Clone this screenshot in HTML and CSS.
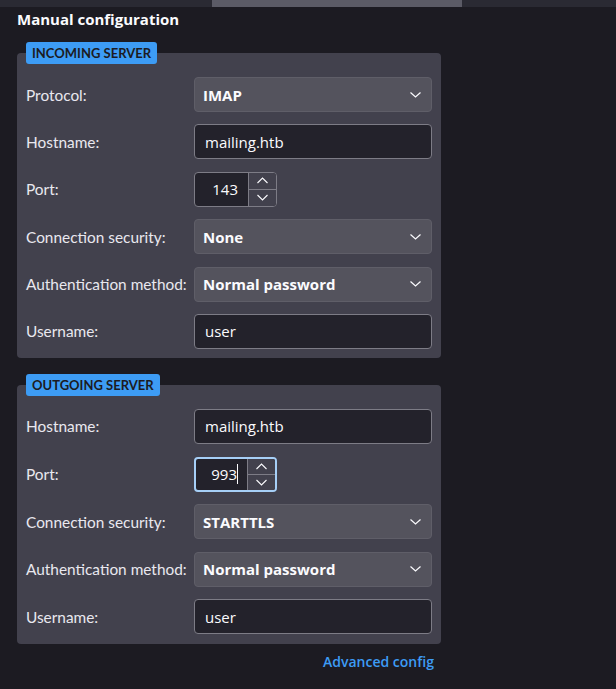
FILE: index.html
```html
<!DOCTYPE html>
<html lang="en">
<head>
<meta charset="utf-8">
<title>Manual configuration</title>
<link rel="stylesheet" href="styles.css">
</head>
<body>
<div class="topbar"><div class="thumb"></div></div>
<main class="content">
  <h1 class="title">Manual configuration</h1>

  <section class="group incoming">
    <div class="badge">INCOMING SERVER</div>
    <div class="rows">
      <div class="row">
        <span class="label">Protocol:</span>
        <div class="select"><span>IMAP</span><svg class="chev" width="11" height="6" viewBox="0 0 11 6"><path d="M0.5 0.5 L5.5 5 L10.5 0.5" fill="none" stroke="#fbfbfe" stroke-width="1.2"/></svg></div>
      </div>
      <div class="row">
        <span class="label">Hostname:</span>
        <div class="input">mailing.htb</div>
      </div>
      <div class="row">
        <span class="label">Port:</span>
        <div class="spin">
          <div class="num">143</div>
          <div class="btns">
            <div class="btn"><svg width="11" height="7" viewBox="0 0 11 7"><path d="M0.5 6 L5.5 1 L10.5 6" fill="none" stroke="#fbfbfe" stroke-width="1.1"/></svg></div>
            <div class="btn"><svg width="11" height="7" viewBox="0 0 11 7"><path d="M0.5 1 L5.5 6 L10.5 1" fill="none" stroke="#fbfbfe" stroke-width="1.1"/></svg></div>
          </div>
        </div>
      </div>
      <div class="row">
        <span class="label">Connection security:</span>
        <div class="select"><span>None</span><svg class="chev" width="11" height="6" viewBox="0 0 11 6"><path d="M0.5 0.5 L5.5 5 L10.5 0.5" fill="none" stroke="#fbfbfe" stroke-width="1.2"/></svg></div>
      </div>
      <div class="row">
        <span class="label">Authentication method:</span>
        <div class="select"><span>Normal password</span><svg class="chev" width="11" height="6" viewBox="0 0 11 6"><path d="M0.5 0.5 L5.5 5 L10.5 0.5" fill="none" stroke="#fbfbfe" stroke-width="1.2"/></svg></div>
      </div>
      <div class="row">
        <span class="label">Username:</span>
        <div class="input">user</div>
      </div>
    </div>
  </section>

  <section class="group outgoing">
    <div class="badge">OUTGOING SERVER</div>
    <div class="rows">
      <div class="row">
        <span class="label">Hostname:</span>
        <div class="input">mailing.htb</div>
      </div>
      <div class="row">
        <span class="label">Port:</span>
        <div class="spin focused">
          <div class="num">993<span class="caret"></span></div>
          <div class="btns">
            <div class="btn"><svg width="11" height="7" viewBox="0 0 11 7"><path d="M0.5 6 L5.5 1 L10.5 6" fill="none" stroke="#fbfbfe" stroke-width="1.1"/></svg></div>
            <div class="btn"><svg width="11" height="7" viewBox="0 0 11 7"><path d="M0.5 1 L5.5 6 L10.5 1" fill="none" stroke="#fbfbfe" stroke-width="1.1"/></svg></div>
          </div>
        </div>
      </div>
      <div class="row">
        <span class="label">Connection security:</span>
        <div class="select"><span>STARTTLS</span><svg class="chev" width="11" height="6" viewBox="0 0 11 6"><path d="M0.5 0.5 L5.5 5 L10.5 0.5" fill="none" stroke="#fbfbfe" stroke-width="1.2"/></svg></div>
      </div>
      <div class="row">
        <span class="label">Authentication method:</span>
        <div class="select"><span>Normal password</span><svg class="chev" width="11" height="6" viewBox="0 0 11 6"><path d="M0.5 0.5 L5.5 5 L10.5 0.5" fill="none" stroke="#fbfbfe" stroke-width="1.2"/></svg></div>
      </div>
      <div class="row">
        <span class="label">Username:</span>
        <div class="input">user</div>
      </div>
    </div>
  </section>

  <div class="footer"><a class="advanced" href="#">Advanced config</a></div>
</main>
</body>
</html>
```

FILE: styles.css
```css
* { box-sizing: border-box; }
html, body { margin: 0; padding: 0; }
body {
  background: #1c1b22;
  color: #fbfbfe;
  font-family: Lato, "Noto Sans", "Liberation Sans", sans-serif;
  font-size: 15px;
  width: 616px;
  height: 689px;
  overflow: hidden;
}
.topbar {
  height: 7px;
  background: #2a2a33;
  display: flex;
}
.thumb {
  margin-left: 212px;
  width: 250px;
  background: #5b5b66;
}
.content {
  padding: 0 0 0 17px;
  width: 441px;
}
.title {
  margin: 0;
  padding-top: 2px;
  height: 35px;
  font-family: "Open Sans", Lato, sans-serif;
  font-size: 15px;
  font-weight: 700;
  line-height: 20px;
  color: #fbfbfe;
}
.group {
  display: flex;
  flex-direction: column;
  background: #42414d;
  border-radius: 4px;
  padding: 0 9px;
  margin-top: 11px;
}
.incoming { padding-bottom: 9px; }
.outgoing { margin-top: 27px; padding-bottom: 10px; }
.badge {
  align-self: flex-start;
  margin-top: -11px;
  height: 22px;
  line-height: 22px;
  padding: 0 6px;
  background: #3d9cf5;
  color: #1c1b22;
  font-weight: 700;
  font-size: 13px;
  border-radius: 3px;
}
.rows {
  display: flex;
  flex-direction: column;
  gap: 12.4px;
  margin-top: 13px;
}
.outgoing .rows { margin-top: 13px; gap: 12.6px; }
.row {
  display: grid;
  grid-template-columns: 168px 238px;
  align-items: center;
  height: 35px;
}
.label {
  color: #e9e8ef;
  white-space: nowrap;
  font-size: 15.4px;
}
.select {
  height: 35px;
  background: #54535d;
  border: 1px solid #5f5e68;
  border-radius: 4px;
  display: flex;
  align-items: center;
  justify-content: space-between;
  padding: 0 10px 0 8px;
  font-family: "Open Sans", Lato, sans-serif;
  font-weight: 700;
  font-size: 15px;
}
.input {
  height: 35px;
  background: #23222b;
  border: 1px solid #7d7c86;
  border-radius: 4px;
  display: flex;
  align-items: center;
  padding: 0 10px;
  font-family: "Open Sans", Lato, sans-serif;
  font-size: 15px;
}
.spin {
  width: 83px;
  height: 35px;
  display: flex;
  border: 1px solid #7d7c86;
  border-radius: 4px;
  background: #23222b;
  overflow: hidden;
}
.spin.focused {
  border: 2px solid #a6cff7;
}
.num {
  flex: 1;
  display: flex;
  align-items: center;
  justify-content: flex-end;
  padding-right: 10px;
  font-family: "Open Sans", Lato, sans-serif;
  font-size: 15px;
}
.focused .num { padding-right: 9px; }
.caret {
  width: 1px;
  height: 20px;
  background: #fbfbfe;
}
.btns {
  width: 28px;
  display: flex;
  flex-direction: column;
  background: #42414d;
  border-left: 1px solid #7d7c86;
}
.btn {
  flex: 1;
  display: flex;
  align-items: center;
  justify-content: center;
}
.btn + .btn { border-top: 1px solid #7d7c86; }
.footer {
  display: flex;
  justify-content: flex-end;
  padding: 8px 7px 0 0;
}
.advanced {
  color: #3d9cf5;
  font-family: "Open Sans", Lato, sans-serif;
  font-weight: 600;
  font-size: 14px;
  text-decoration: none;
}
```
